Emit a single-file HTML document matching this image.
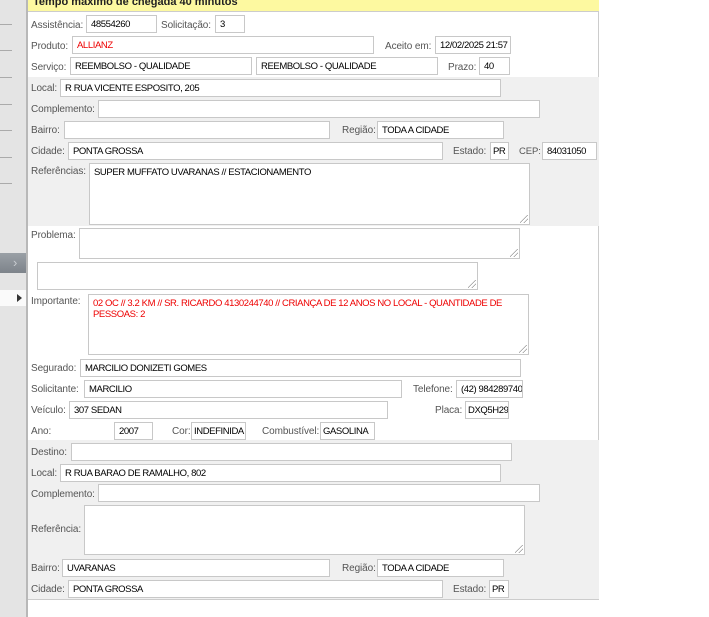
<!DOCTYPE html>
<html><head><meta charset="utf-8">
<style>
*{margin:0;padding:0;box-sizing:border-box}
body{width:709px;height:617px;overflow:hidden;background:#fff;position:relative;font-family:"Liberation Sans","DejaVu Sans",sans-serif}
.a{position:absolute}
.l{position:absolute;font-size:10px;color:#555;letter-spacing:-0.1px;white-space:nowrap;line-height:12px;margin-top:2px}
.i{position:absolute;background:#fff;border:1px solid #c8c8c8;font-size:9.5px;letter-spacing:-0.4px;color:#000;padding:1px 0 0 4px;line-height:15px;white-space:nowrap;overflow:hidden}
.t{line-height:11px;padding-top:3px;white-space:normal}
.r{color:#e00}
.g{position:absolute;left:28px;width:571px;background:#f0f0f0}
.rs{position:absolute;right:1px;bottom:1px;width:8px;height:8px;background:linear-gradient(135deg,transparent 45%,#999 45%,#999 52%,transparent 52%,transparent 70%,#999 70%,#999 77%,transparent 77%)}
.sl{position:absolute;left:0;width:12px;height:1px;background:#aaa}
</style></head><body>
<div class="a" style="left:0;top:0;width:26px;height:617px;background:#e4e4e4"></div>
<div class="a" style="left:26px;top:0;width:2px;height:617px;background:#b8b8b8"></div>
<div class="sl" style="top:24px"></div><div class="sl" style="top:50px"></div><div class="sl" style="top:77px"></div><div class="sl" style="top:104px"></div><div class="sl" style="top:130px"></div><div class="sl" style="top:157px"></div><div class="sl" style="top:183px"></div>
<div class="a" style="left:0;top:253px;width:26px;height:20px;background:linear-gradient(#9aa0a6,#7d838a)"></div>
<div class="a" style="left:13px;top:255px;color:#c8ccd0;font-size:13px">&#8250;</div>
<div class="a" style="left:0;top:290px;width:26px;height:16px;background:#fafafa"></div>
<div class="a" style="left:17px;top:294px;width:0;height:0;border-left:5px solid #333;border-top:4px solid transparent;border-bottom:4px solid transparent"></div>
<div class="a" style="left:28px;top:0;width:571px;height:12px;background:#fdf9a0;border-bottom:1px solid #ccc"></div>
<div class="a" style="left:33px;top:-4px;font-size:11px;font-weight:bold;color:#222">Tempo máximo de chegada 40 minutos</div>
<div class="a" style="left:598px;top:12px;width:1px;height:588px;background:#ccc"></div>
<div class="g" style="top:77px;height:149px"></div>
<div class="g" style="top:440px;height:159px"></div>
<div class="a" style="left:28px;top:599px;width:571px;height:1px;background:#ccc"></div>

<div class="l" style="left:31px;top:18px">Assistência:</div><div class="i" style="left:86px;top:15px;width:71px;height:18px">48554260</div>
<div class="l" style="left:161px;top:18px">Solicitação:</div><div class="i" style="left:215px;top:15px;width:30px;height:18px">3</div>
<div class="l" style="left:31px;top:39px">Produto:</div><div class="i r" style="left:72px;top:36px;width:302px;height:18px">ALLIANZ</div>
<div class="l" style="left:385px;top:39px">Aceito em:</div><div class="i" style="left:435px;top:36px;width:76px;height:18px">12/02/2025 21:57</div>
<div class="l" style="left:31px;top:60px">Serviço:</div><div class="i" style="left:70px;top:57px;width:182px;height:18px">REEMBOLSO - QUALIDADE</div>
<div class="i" style="left:256px;top:57px;width:182px;height:18px">REEMBOLSO - QUALIDADE</div>
<div class="l" style="left:448px;top:60px">Prazo:</div><div class="i" style="left:479px;top:57px;width:31px;height:18px">40</div>

<div class="l" style="left:31px;top:81px">Local:</div><div class="i" style="left:60px;top:79px;width:441px;height:18px">R RUA VICENTE ESPOSITO, 205</div>
<div class="l" style="left:31px;top:102px">Complemento:</div><div class="i" style="left:98px;top:100px;width:442px;height:18px"></div>
<div class="l" style="left:31px;top:123px">Bairro:</div><div class="i" style="left:64px;top:121px;width:266px;height:18px"></div>
<div class="l" style="left:342px;top:123px">Região:</div><div class="i" style="left:377px;top:121px;width:127px;height:18px">TODA A CIDADE</div>
<div class="l" style="left:31px;top:144px">Cidade:</div><div class="i" style="left:68px;top:142px;width:375px;height:18px">PONTA GROSSA</div>
<div class="l" style="left:453px;top:144px">Estado:</div><div class="i" style="left:490px;top:142px;width:19px;height:18px;padding-left:2px">PR</div>
<div class="l" style="left:519px;top:144px;font-size:9.5px">CEP:</div><div class="i" style="left:542px;top:142px;width:55px;height:18px">84031050</div>
<div class="l" style="left:31px;top:164px">Referências:</div><div class="i t" style="left:89px;top:163px;width:441px;height:62px">SUPER MUFFATO UVARANAS // ESTACIONAMENTO<div class="rs"></div></div>

<div class="l" style="left:31px;top:228px">Problema:</div><div class="i t" style="left:79px;top:228px;width:441px;height:31px"><div class="rs"></div></div>
<div class="i t" style="left:37px;top:262px;width:441px;height:28px"><div class="rs"></div></div>
<div class="l" style="left:31px;top:294px">Importante:</div><div class="i t r" style="left:88px;top:294px;width:441px;height:61px">02 OC // 3.2 KM // SR. RICARDO 4130244740 // CRIANÇA DE 12 ANOS NO LOCAL - QUANTIDADE DE PESSOAS: 2<div class="rs"></div></div>

<div class="l" style="left:31px;top:361px">Segurado:</div><div class="i" style="left:80px;top:359px;width:441px;height:18px">MARCILIO DONIZETI GOMES</div>
<div class="l" style="left:31px;top:382px">Solicitante:</div><div class="i" style="left:84px;top:380px;width:318px;height:18px">MARCILIO</div>
<div class="l" style="left:413px;top:382px">Telefone:</div><div class="i" style="left:456px;top:380px;width:67px;height:18px">(42) 984289740</div>
<div class="l" style="left:31px;top:403px">Veículo:</div><div class="i" style="left:69px;top:401px;width:319px;height:18px">307 SEDAN</div>
<div class="l" style="left:435px;top:403px">Placa:</div><div class="i" style="left:465px;top:401px;width:44px;height:18px;padding-left:2px">DXQ5H29</div>
<div class="l" style="left:31px;top:424px">Ano:</div><div class="i" style="left:114px;top:422px;width:39px;height:18px">2007</div>
<div class="l" style="left:172px;top:424px">Cor:</div><div class="i" style="left:191px;top:422px;width:55px;height:18px;padding-left:2px">INDEFINIDA</div>
<div class="l" style="left:262px;top:424px">Combustível:</div><div class="i" style="left:320px;top:422px;width:55px;height:18px;padding-left:2px">GASOLINA</div>

<div class="l" style="left:31px;top:445px">Destino:</div><div class="i" style="left:71px;top:443px;width:441px;height:18px"></div>
<div class="l" style="left:31px;top:466px">Local:</div><div class="i" style="left:60px;top:464px;width:441px;height:18px">R RUA BARAO DE RAMALHO, 802</div>
<div class="l" style="left:31px;top:487px">Complemento:</div><div class="i" style="left:98px;top:484px;width:442px;height:18px"></div>
<div class="l" style="left:31px;top:522px">Referência:</div><div class="i t" style="left:84px;top:505px;width:441px;height:50px"><div class="rs"></div></div>
<div class="l" style="left:31px;top:561px">Bairro:</div><div class="i" style="left:62px;top:559px;width:268px;height:18px">UVARANAS</div>
<div class="l" style="left:342px;top:561px">Região:</div><div class="i" style="left:377px;top:559px;width:127px;height:18px">TODA A CIDADE</div>
<div class="l" style="left:31px;top:582px">Cidade:</div><div class="i" style="left:68px;top:580px;width:375px;height:18px">PONTA GROSSA</div>
<div class="l" style="left:453px;top:582px">Estado:</div><div class="i" style="left:489px;top:580px;width:20px;height:18px;padding-left:2px">PR</div>
</body></html>
